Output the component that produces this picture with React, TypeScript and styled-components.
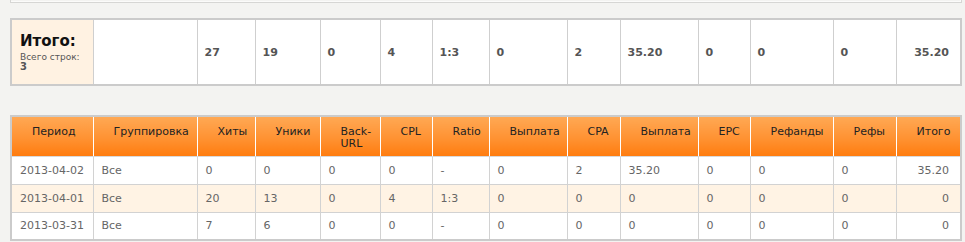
import React from 'react'
import styled, { createGlobalStyle } from 'styled-components'

const GlobalStyle = createGlobalStyle`
  html, body {
    margin: 0;
    padding: 0;
    background: #f3f3f1;
  }
  body {
    font-family: 'DejaVu Sans', Verdana, sans-serif;
    font-size: 11px;
    color: #666;
  }
`

const widths = [82, 104, 58, 65, 60, 52, 57, 78, 53, 78, 52, 83, 63, 65]

const headers = [
  'Период',
  'Группировка',
  'Хиты',
  'Уники',
  'Back-URL',
  'CPL',
  'Ratio',
  'Выплата',
  'CPA',
  'Выплата',
  'EPC',
  'Рефанды',
  'Рефы',
  'Итого',
]

const totals = ['27', '19', '0', '4', '1:3', '0', '2', '35.20', '0', '0', '0', '35.20']

const rows = [
  ['2013-04-02', 'Все', '0', '0', '0', '0', '-', '0', '2', '35.20', '0', '0', '0', '35.20'],
  ['2013-04-01', 'Все', '20', '13', '0', '4', '1:3', '0', '0', '0', '0', '0', '0', '0'],
  ['2013-03-31', 'Все', '7', '6', '0', '0', '-', '0', '0', '0', '0', '0', '0', '0'],
]

const App: React.FC = () => {
  return (
    <Page>
      <GlobalStyle />
      <TopPanel />
      <SummaryTable>
        <Cols />
        <tbody>
          <tr>
            <TitleCell>
              <Title>Итого:</Title>
              <RowCount>Всего строк:</RowCount>
              <RowCount>3</RowCount>
            </TitleCell>
            <SumCell />
            {totals.map((v, i) => (
              <SumCell key={i} $right={i === totals.length - 1}>
                {v}
              </SumCell>
            ))}
          </tr>
        </tbody>
      </SummaryTable>
      <StatsTable>
        <Cols />
        <thead>
          <tr>
            {headers.map((h, i) => (
              <HeadCell key={i}>
                {h === 'Back-URL' ? (
                  <>
                    Back-
                    <br />
                    URL
                  </>
                ) : (
                  h
                )}
              </HeadCell>
            ))}
          </tr>
        </thead>
        <tbody>
          {rows.map((r, ri) => (
            <Row key={ri} $odd={ri % 2 === 1}>
              {r.map((v, i) => (
                <Cell key={i} $right={i === r.length - 1}>
                  {v}
                </Cell>
              ))}
            </Row>
          ))}
        </tbody>
      </StatsTable>
    </Page>
  )
}

const Cols: React.FC = () => (
  <colgroup>
    {widths.map((w, i) => (
      <col key={i} style={{ width: w }} />
    ))}
  </colgroup>
)

export default App

const Page = styled.div`
  padding: 0 3px 4px 10px;
  width: 952px;
`

const TopPanel = styled.div`
  height: 2px;
  width: 950px;
  border: 1px solid #d6d6d4;
  border-top: none;
  box-shadow: inset -1px -1px 0 #fbfbfa;
`

const BaseTable = styled.table`
  width: 952px;
  table-layout: fixed;
  border-collapse: collapse;
  border: 2px solid #cbcbcb;
`

const SummaryTable = styled(BaseTable)`
  margin-top: 15px;
  background: #fff;
`

const TitleCell = styled.td`
  background: #fff2e2;
  border: 1px solid #cfcfcf;
  padding: 12px 4px 12px 8px;
  vertical-align: top;
  height: 40px;
`

const Title = styled.div`
  font-family: 'DejaVu Sans', Verdana, sans-serif;
  font-weight: bold;
  font-size: 15px;
  line-height: 19px;
  color: #111;
  margin-bottom: 1px;
`

const RowCount = styled.div`
  font-size: 9px;
  line-height: 11px;
  color: #555;
  & + & {
    margin-top: -2px;
    font-size: 10px;
    font-weight: bold;
  }
`

const SumCell = styled.td<{ $right?: boolean }>`
  border: 1px solid #cfcfcf;
  padding: 0 ${(p) => (p.$right ? '11px' : '4px')} 0 7px;
  text-align: ${(p) => (p.$right ? 'right' : 'left')};
  font-weight: bold;
  color: #555;
  vertical-align: middle;
`

const StatsTable = styled(BaseTable)`
  margin-top: 29px;
  background: #fff;
`

const HeadCell = styled.th`
  height: 40px;
  padding: 9px 9px 0 20px;
  box-sizing: border-box;
  vertical-align: top;
  text-align: left;
  font-weight: normal;
  font-size: 11px;
  line-height: 12px;
  color: #222;
  background: linear-gradient(to bottom, #ffa854 0%, #ff9232 55%, #ff7c0f 100%);
  border-left: 1px solid #fff;
  border-right: 1px solid #fff;
  border-bottom: 1px solid #d9d9d9;
  white-space: nowrap;
`

const Row = styled.tr<{ $odd: boolean }>`
  background: ${(p) => (p.$odd ? '#fff3e4' : '#fff')};
`

const Cell = styled.td<{ $right?: boolean }>`
  height: 28px;
  box-sizing: border-box;
  padding: 0 ${(p) => (p.$right ? '11px' : '4px')} 0 8px;
  text-align: ${(p) => (p.$right ? 'right' : 'left')};
  border: 1px solid #d2d2d2;
  color: #666;
  white-space: nowrap;
`
